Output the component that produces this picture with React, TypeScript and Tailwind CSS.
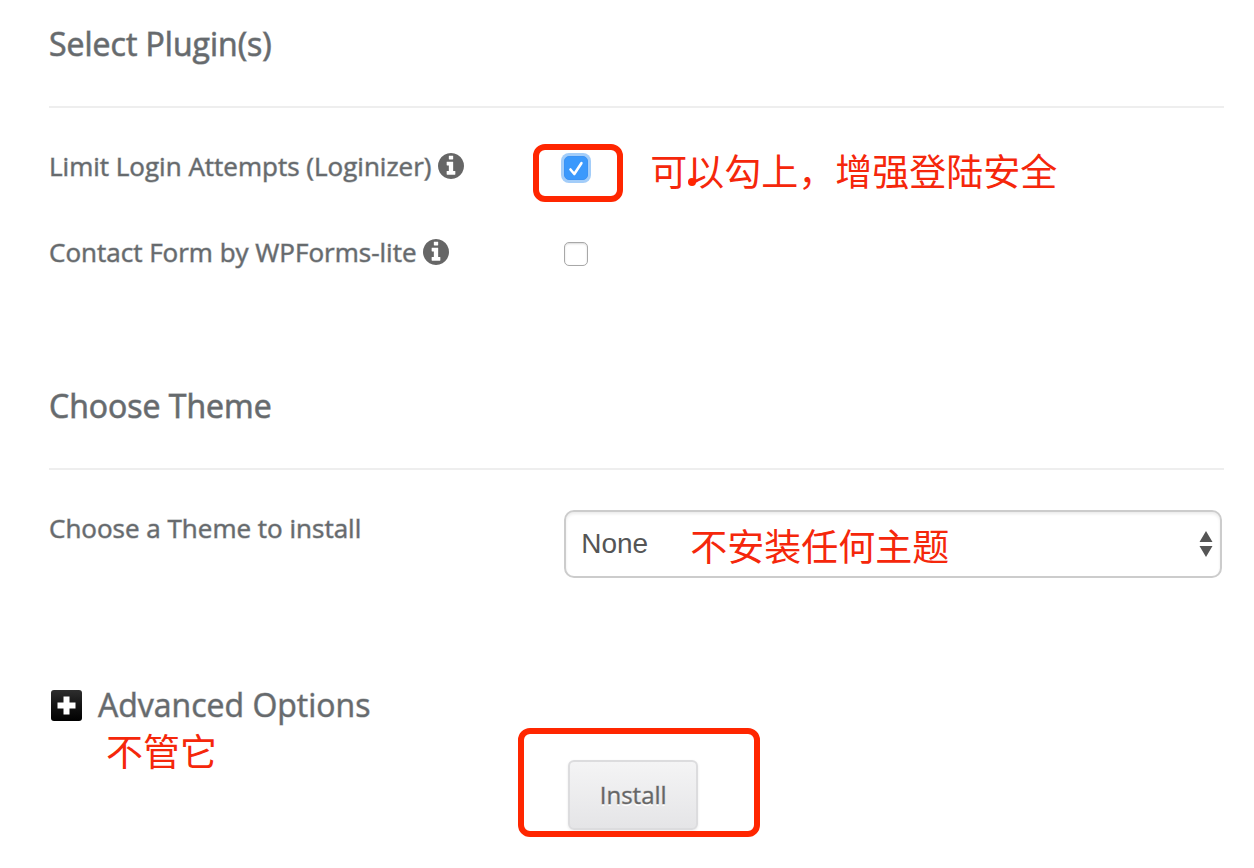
import { useState, type ReactNode } from "react";

const PLUGINS = [
  {
    id: "loginizer",
    label: "Limit Login Attempts (Loginizer)",
    checked: true,
    note: "可以勾上，增强登陆安全",
  },
  { id: "wpforms", label: "Contact Form by WPForms-lite", checked: false, note: "" },
];

function SectionTitle({ children }: { children: ReactNode }) {
  return (
    <h2 className="border-b-2 border-[#eeeeee] pb-[42px] text-[32px] leading-10 [-webkit-text-stroke:1px_#666a6db0]">
      {children}
    </h2>
  );
}

function Note({ className, children }: { className: string; children: ReactNode }) {
  return (
    <span
      className={`pointer-events-none absolute font-['Noto_Sans_CJK_SC',sans-serif] text-[37px] leading-10 font-normal whitespace-nowrap text-[#f5270b] ${className}`}
    >
      {children}
    </span>
  );
}

function InfoIcon() {
  return (
    <svg viewBox="0 0 1536 1536" className="h-[26px] w-[26px]" fill="#666666" aria-hidden="true">
      <path d="M1024 1248v-160q0-14-9-23t-23-9h-96v-512q0-14-9-23t-23-9h-320q-14 0-23 9t-9 23v160q0 14 9 23t23 9h96v320h-96q-14 0-23 9t-9 23v160q0 14 9 23t23 9h448q14 0 23-9t9-23zM896 352v-160q0-14-9-23t-23-9h-192q-14 0-23 9t-9 23v160q0 14 9 23t23 9h192q14 0 23-9t9-23zM1536 768q0 209-103 385.5t-279.5 279.5-385.5 103-385.5-103-279.5-279.5-103-385.5 103-385.5 279.5-279.5 385.5-103 385.5 103 279.5 279.5 103 385.5z" />
    </svg>
  );
}

function Checkbox({ id, defaultChecked }: { id: string; defaultChecked: boolean }) {
  return (
    <span className="relative block h-6 w-6">
      <input
        id={id}
        type="checkbox"
        defaultChecked={defaultChecked}
        className="peer block h-6 w-6 appearance-none rounded-[5px] border border-[#a8a8a8] bg-white shadow-[inset_0_1px_2px_rgba(0,0,0,0.15)] checked:border-[#3b93f5] checked:bg-[#3b99fc] checked:shadow-[0_0_0_3px_#a3cdf9]"
      />
      <svg
        viewBox="0 0 24 24"
        className="pointer-events-none absolute inset-0 hidden h-6 w-6 peer-checked:block"
        fill="none"
        stroke="white"
        strokeWidth="2.6"
        strokeLinecap="round"
        strokeLinejoin="round"
        aria-hidden="true"
      >
        <path d="M6.5 13.5 10.3 18 17.4 7.2" />
      </svg>
    </span>
  );
}

export default function App() {
  const [theme, setTheme] = useState("none");
  const [advanced, setAdvanced] = useState(false);

  return (
    <form
      className="bg-white pt-6 pr-[30px] pb-8 pl-[49px] font-['Open_Sans',sans-serif] text-[#666a6d]"
      onSubmit={(event) => event.preventDefault()}
    >
      <section>
        <SectionTitle>Select Plugin(s)</SectionTitle>
        <div className="mt-10 flex flex-col gap-[50px]">
          {PLUGINS.map((plugin) => (
            <div key={plugin.id} className="grid grid-cols-[7fr_9fr] items-start gap-x-0.5">
              <label
                htmlFor={plugin.id}
                className="flex items-center gap-1.5 text-[26px] leading-9 [-webkit-text-stroke:1px_#666a6d80]"
              >
                {plugin.label}
                <InfoIcon />
              </label>
              <div className="relative mt-2">
                <Checkbox id={plugin.id} defaultChecked={plugin.checked} />
                {plugin.note ? (
                  <>
                    <span className="pointer-events-none absolute -top-3 -left-[31px] h-[58px] w-[90px] rounded-xl border-6 border-[#ff2600]" />
                    <Note className="-top-1.5 left-[86px]">{plugin.note}</Note>
                    <span className="pointer-events-none absolute top-[22px] left-[124px] h-2 w-2 rounded-full bg-[#ff2600]" />
                  </>
                ) : null}
              </div>
            </div>
          ))}
        </div>
      </section>

      <section className="mt-[116px]">
        <SectionTitle>Choose Theme</SectionTitle>
        <div className="mt-10 grid grid-cols-[7fr_9fr] items-start gap-x-0.5">
          <label
            htmlFor="theme"
            className="text-[26px] leading-9 [-webkit-text-stroke:1px_#666a6d80]"
          >
            Choose a Theme to install
          </label>
          <div className="relative mr-0.5">
            <select
              id="theme"
              value={theme}
              onChange={(event) => setTheme(event.target.value)}
              className="block h-[68px] w-full appearance-none rounded-[10px] border-2 border-[#cccccc] bg-white px-[15px] font-['Liberation_Sans',sans-serif] text-[28px] text-[#555555] shadow-[inset_0_2px_3px_rgba(0,0,0,0.08)]"
            >
              <option value="none">None</option>
            </select>
            <Note className="top-[15px] left-[126px]">不安装任何主题</Note>
            <svg
              viewBox="0 0 14 26"
              className="pointer-events-none absolute top-[21px] right-[9px] h-[26px] w-3.5"
              fill="#555555"
              aria-hidden="true"
            >
              <path d="M7 0 13.5 11H.5zM.5 15h13L7 26z" />
            </svg>
          </div>
        </div>
      </section>

      <section className="relative mt-[107px]">
        <h2 className="text-[32px] leading-10">
          <button
            type="button"
            aria-expanded={advanced}
            onClick={() => setAdvanced(!advanced)}
            className="flex items-center gap-4 pl-0.5 [-webkit-text-stroke:1px_#666a6d80]"
          >
            <svg viewBox="0 0 31 31" className="h-[31px] w-[31px]" aria-hidden="true">
              <defs>
                <linearGradient id="toggle" x1="0" y1="0" x2="0" y2="1">
                  <stop offset="0" stopColor="#2e2e2e" />
                  <stop offset="0.5" stopColor="#141414" />
                  <stop offset="1" stopColor="#000000" />
                </linearGradient>
              </defs>
              <rect width="31" height="31" rx="3" fill="url(#toggle)" />
              <path d="M12.5 6.5h6v6h6v6h-6v6h-6v-6h-6v-6h6z" fill="white" />
            </svg>
            Advanced Options
          </button>
        </h2>
        <Note className="top-[45px] left-[57px]">不管它</Note>
      </section>

      <div className="mt-[35px] grid grid-cols-[7fr_9fr] gap-x-0.5">
        <div className="relative col-start-2 ml-1">
          <button
            type="submit"
            className="block h-[70px] w-[130px] rounded-md border-2 border-[#dcdcde] bg-linear-to-b from-[#f4f4f5] to-[#e5e5e7] text-[24px] text-[#666666] shadow-[0_1px_3px_rgba(0,0,0,0.08)] [-webkit-text-stroke:1px_#66666660] text-shadow-[0_2px_0_#ffffff]"
          >
            Install
          </button>
          <span className="pointer-events-none absolute -top-8 -left-[50px] h-[109px] w-[242px] rounded-xl border-6 border-[#ff2600]" />
        </div>
      </div>
    </form>
  );
}
